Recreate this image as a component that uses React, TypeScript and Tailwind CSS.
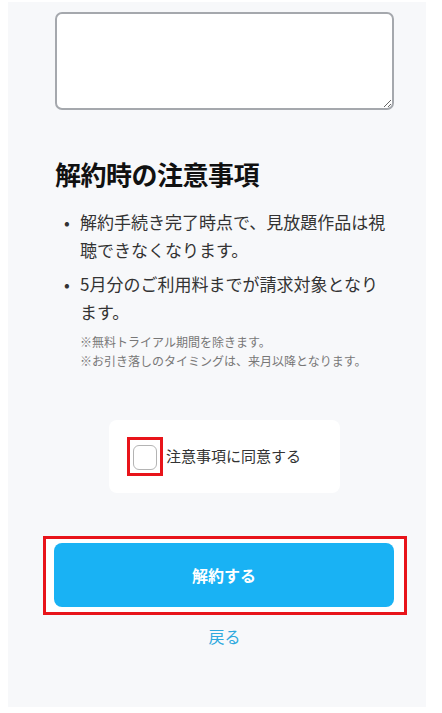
import { useState } from 'react';

const font = { fontFamily: '"Noto Sans CJK JP", "Noto Sans", sans-serif' };

export default function App() {
  const [agreed, setAgreed] = useState(false);

  return (
    <div className="bg-white w-[442px] h-[713px] pl-[8px] pt-[2px]" style={font}>
      <div className="w-[418px] h-[705px] bg-[#f7f8fa] pl-[47px] pr-[32px] pt-[10px]">
        <textarea className="block w-[339px] h-[98px] bg-white border-2 border-[#a5a8ad] rounded-[7px] resize-y outline-none" />

        <h2 className="mt-[46px] text-[26px] leading-[36px] font-bold text-[#111] tracking-[-0.5px]">解約時の注意事項</h2>

        <ul className="mt-[16px] text-[17px] leading-[28px] text-[#333]">
          <li className="flex mb-[6px]">
            <span className="w-[25px] shrink-0 pl-[9px]">•</span>
            <span>解約手続き完了時点で、見放題作品は視聴できなくなります。</span>
          </li>
          <li className="flex">
            <span className="w-[25px] shrink-0 pl-[9px]">•</span>
            <span>5月分のご利用料までが請求対象となります。</span>
          </li>
        </ul>
        <div className="pl-[25px] mt-[6px] text-[12px] leading-[19px] text-[#777]">
          <p>※無料トライアル期間を除きます。</p>
          <p>※お引き落しのタイミングは、来月以降となります。</p>
        </div>

        <div className="flex justify-center mt-[50px]">
          <label className="w-[231px] h-[73px] bg-white rounded-[8px] flex items-center pl-[18px] cursor-pointer">
            <span className="border-[3px] border-[#e8141a] pl-[3px] pr-[3px] pt-[5px] pb-[3px]">
              <input type="checkbox" checked={agreed} onChange={(e) => setAgreed(e.target.checked)} className="sr-only" />
              <span className={`block w-[24px] h-[25px] rounded-[6px] border-[1.5px] ${agreed ? 'bg-[#19b2f4] border-[#19b2f4]' : 'bg-white border-[#b4b4b4]'}`} />
            </span>
            <span className="ml-[3px] text-[15px] text-[#333]">注意事項に同意する</span>
          </label>
        </div>

        <div className="mt-[43px] -ml-[12px] -mr-[13px] border-[3px] border-[#e8141a] bg-white pl-[8px] pr-[10px] pt-[4px] pb-[5px]">
          <button className="w-[340px] h-[64px] rounded-[8px] bg-[#19b2f4] text-white text-[16px] font-bold">解約する</button>
        </div>

        <div className="mt-[9px] text-center">
          <a href="#" className="text-[16px] text-[#2ea9de]">戻る</a>
        </div>
      </div>
    </div>
  );
}
